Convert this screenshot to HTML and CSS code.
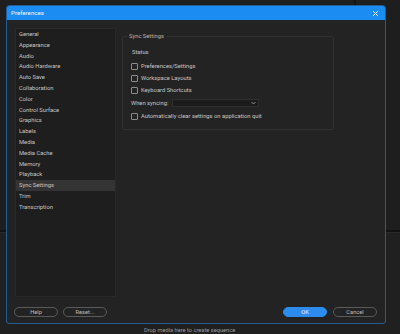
FILE: index.html
```html
<!doctype html>
<html lang="en">
    <head>
        <meta charset="UTF-8" />
        <meta name="viewport" content="width=device-width, initial-scale=1.0" />
        <title>Preferences</title>
        <link rel="stylesheet" href="styles.css">
    </head>
    <body>
        <div class="workspace">
            <div class="panel panel-top">
                <div class="pane"></div>
                <div class="pane pane-side"></div>
            </div>
            <div class="panel panel-bottom">
                <span class="drop-hint">Drop media here to create sequence</span>
            </div>
        </div>

        <div class="dialog">
            <div class="titlebar">
                <span>Preferences</span>
                <svg class="close" width="7" height="7" viewBox="0 0 7 7">
                    <path d="M1 1L6 6M6 1L1 6" stroke="#e8f3ff" stroke-width="1" />
                </svg>
            </div>

            <div class="main">
                <ul class="nav">
                    <li>General</li>
                    <li>Appearance</li>
                    <li>Audio</li>
                    <li>Audio Hardware</li>
                    <li>Auto Save</li>
                    <li>Collaboration</li>
                    <li>Color</li>
                    <li>Control Surface</li>
                    <li>Graphics</li>
                    <li>Labels</li>
                    <li>Media</li>
                    <li>Media Cache</li>
                    <li>Memory</li>
                    <li>Playback</li>
                    <li class="active">Sync Settings</li>
                    <li>Trim</li>
                    <li>Transcription</li>
                </ul>

                <div class="content">
                    <fieldset class="group">
                        <legend>Sync Settings</legend>
                        <div class="status">Status</div>
                        <label class="check"><span class="box"></span>Preferences/Settings</label>
                        <label class="check"><span class="box"></span>Workspace Layouts</label>
                        <label class="check"><span class="box"></span>Keyboard Shortcuts</label>
                        <div class="sync-row">
                            <span class="sync-label">When syncing:</span>
                            <div class="select">
                                <svg width="5" height="4" viewBox="0 0 5 4">
                                    <path d="M0.5 1L2.5 3L4.5 1" fill="none" stroke="#9a9a9a" stroke-width="0.9" />
                                </svg>
                            </div>
                        </div>
                        <label class="check check-last"><span class="box"></span>Automatically clear settings on application quit</label>
                    </fieldset>
                </div>
            </div>

            <div class="footer">
                <button class="btn">Help</button>
                <button class="btn">Reset...</button>
                <span class="spacer"></span>
                <button class="btn btn-primary">OK</button>
                <button class="btn">Cancel</button>
            </div>
        </div>
    </body>
</html>
```

FILE: styles.css
```css
body {
    margin: 0;
    background-color: #1c1c1c;
    font-family: Roboto, "Noto Sans", sans-serif;
    color: #c6c6c6;
    overflow: hidden;
}
.workspace {
    width: 400px;
    height: 334px;
    display: flex;
    flex-direction: column;
}
.panel-top {
    height: 230px;
    display: flex;
    border-bottom: 2px solid #121212;
}
.pane {
    flex: 1;
    background: #1e1e1e;
}
.pane-side {
    flex: 0 0 44px;
    border-left: 2px solid #141414;
}
.panel-bottom {
    flex: 1;
    background: #202020;
    border-top: 1px solid #2a2a2a;
    position: relative;
}
.drop-hint {
    position: absolute;
    left: 144px;
    bottom: 0;
    line-height: 7px;
    font-size: 5.7px;
    color: #9a9a9a;
}

/* dialog */
.dialog {
    position: absolute;
    left: 6px;
    top: 5px;
    width: 378px;
    height: 317px;
    background: #232323;
    border: 1px solid #1f5d94;
    border-radius: 3px;
    display: flex;
    flex-direction: column;
    overflow: hidden;
}
.titlebar {
    height: 14px;
    background: #1b8df2;
    display: flex;
    align-items: center;
    justify-content: space-between;
    padding: 0 6px 0 4px;
    font-size: 6.2px;
    color: #f2f8ff;
}
.main {
    display: flex;
    gap: 6px;
    padding: 8px 8px 0 8px;
}
.nav {
    list-style: none;
    margin: 0;
    padding: 0;
    width: 99px;
    height: 267px;
    background: #1e1e1e;
    border: 1px solid #292929;
    font-size: 5.8px;
}
.nav li {
    height: 10.8px;
    line-height: 10.8px;
    padding-left: 3px;
    white-space: nowrap;
}
.nav li.active {
    background: #343434;
}
.content {
    width: 212px;
    padding-top: 5px;
}
.group {
    margin: 0;
    padding: 9px 0 6px 8px;
    border: 1px solid #313131;
    border-radius: 2px;
    height: 80px;
    font-size: 5.8px;
}
.group legend {
    padding: 0 2px;
    margin-left: -4px;
    font-size: 5.8px;
    color: #b4b4b4;
}
.status {
    height: 9px;
    line-height: 9px;
    padding-left: 1px;
    margin-bottom: 3px;
}
.check {
    display: flex;
    align-items: center;
    gap: 3px;
    height: 12px;
    white-space: nowrap;
}
.check-last {
    margin-top: 1px;
}
.box {
    width: 5px;
    height: 5px;
    border: 1px solid #8c8c8c;
    border-radius: 1px;
    flex-shrink: 0;
}
.sync-row {
    display: flex;
    align-items: center;
    gap: 4px;
    height: 13px;
}
.sync-label {
    flex-shrink: 0;
    white-space: nowrap;
}
.select {
    width: 87px;
    height: 8px;
    background: #1b1b1b;
    border: 1px solid #2e2e2e;
    display: flex;
    align-items: center;
    justify-content: flex-end;
    padding-right: 2px;
    box-sizing: border-box;
}

/* footer */
.footer {
    display: flex;
    align-items: center;
    gap: 5px;
    margin-top: 10px;
    padding: 0 8px 0 7px;
}
.spacer {
    flex: 1;
}
.btn {
    width: 44px;
    height: 10px;
    padding: 0;
    font-family: inherit;
    font-size: 5.7px;
    color: #bdbdbd;
    background: transparent;
    border: 1px solid #5a5a5a;
    border-radius: 5px;
}
.btn-primary {
    background: #2b8ced;
    border-color: #2b8ced;
    color: #f2f8ff;
    margin-right: 1px;
}
```
